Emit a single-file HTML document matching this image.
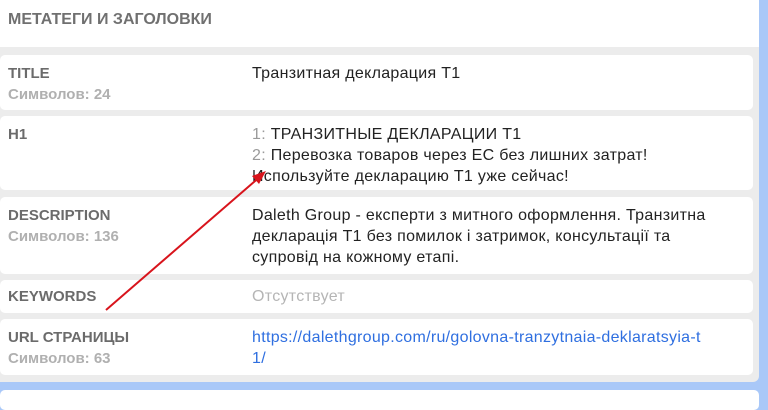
<!DOCTYPE html>
<html><head><meta charset="utf-8"><style>
*{margin:0;padding:0;box-sizing:border-box}
body{width:768px;height:402px;overflow:hidden;background:#a9c8f8;font-family:"Liberation Sans","DejaVu Sans",sans-serif;font-size:15px;position:relative}
.panel{position:absolute;left:0;top:0;width:759px;height:382px;background:#ececec;border-radius:0 0 6px 0}
.hdr{position:absolute;left:0;top:0;width:759px;height:47px;background:#fff;padding:11px 8px;font-weight:bold;font-size:16px;color:#707070}
.card{position:absolute;left:0;width:753px;background:#fff;border-radius:5px}
.lab{position:absolute;left:8px;top:8px;font-weight:bold;color:#6b6b6b;line-height:21px;font-size:15px}
.lab span{display:block;font-weight:bold;color:#b0b0b0}
.val{position:absolute;left:252px;top:8px;width:500px;color:#222;line-height:21px;font-size:16px;letter-spacing:0.3px;white-space:nowrap}
.g{color:#9a9a9a}
a{color:#2f6fe0;text-decoration:none}
.bot{position:absolute;left:0;top:390px;width:759px;height:20px;background:#fff;border-radius:5px}
</style></head><body>
<div class="panel">
<div class="hdr">МЕТАТЕГИ И ЗАГОЛОВКИ</div>
<div class="card" style="top:55px;height:55px"><div class="lab">TITLE<span>Символов: 24</span></div><div class="val">Транзитная декларация Т1</div></div>
<div class="card" style="top:116px;height:74px"><div class="lab">H1</div><div class="val"><span class="g">1:</span> ТРАНЗИТНЫЕ ДЕКЛАРАЦИИ Т1<br><span class="g">2:</span> Перевозка товаров через ЕС без лишних затрат!<br>Используйте декларацию Т1 уже сейчас!</div></div>
<div class="card" style="top:197px;height:77px"><div class="lab">DESCRIPTION<span>Символов: 136</span></div><div class="val">Daleth Group - експерти з митного оформлення. Транзитна<br>декларація Т1 без помилок і затримок, консультації та<br>супровід на кожному етапі.</div></div>
<div class="card" style="top:280px;height:33px"><div class="lab" style="top:6px">KEYWORDS</div><div class="val g" style="top:6px;color:#b5b5b5">Отсутствует</div></div>
<div class="card" style="top:319px;height:56px"><div class="lab">URL СТРАНИЦЫ<span>Символов: 63</span></div><div class="val"><a>https://dalethgroup.com/ru/golovna-tranzytnaia-deklaratsyia-t<br>1/</a></div></div>
</div>
<div class="bot"></div>
<svg style="position:absolute;left:0;top:0" width="768" height="402"><line x1="106" y1="310" x2="262" y2="175" stroke="#d8141c" stroke-width="2"/><polygon points="266,171 252,176 259,184" fill="#d8141c"/></svg>
</body></html>
